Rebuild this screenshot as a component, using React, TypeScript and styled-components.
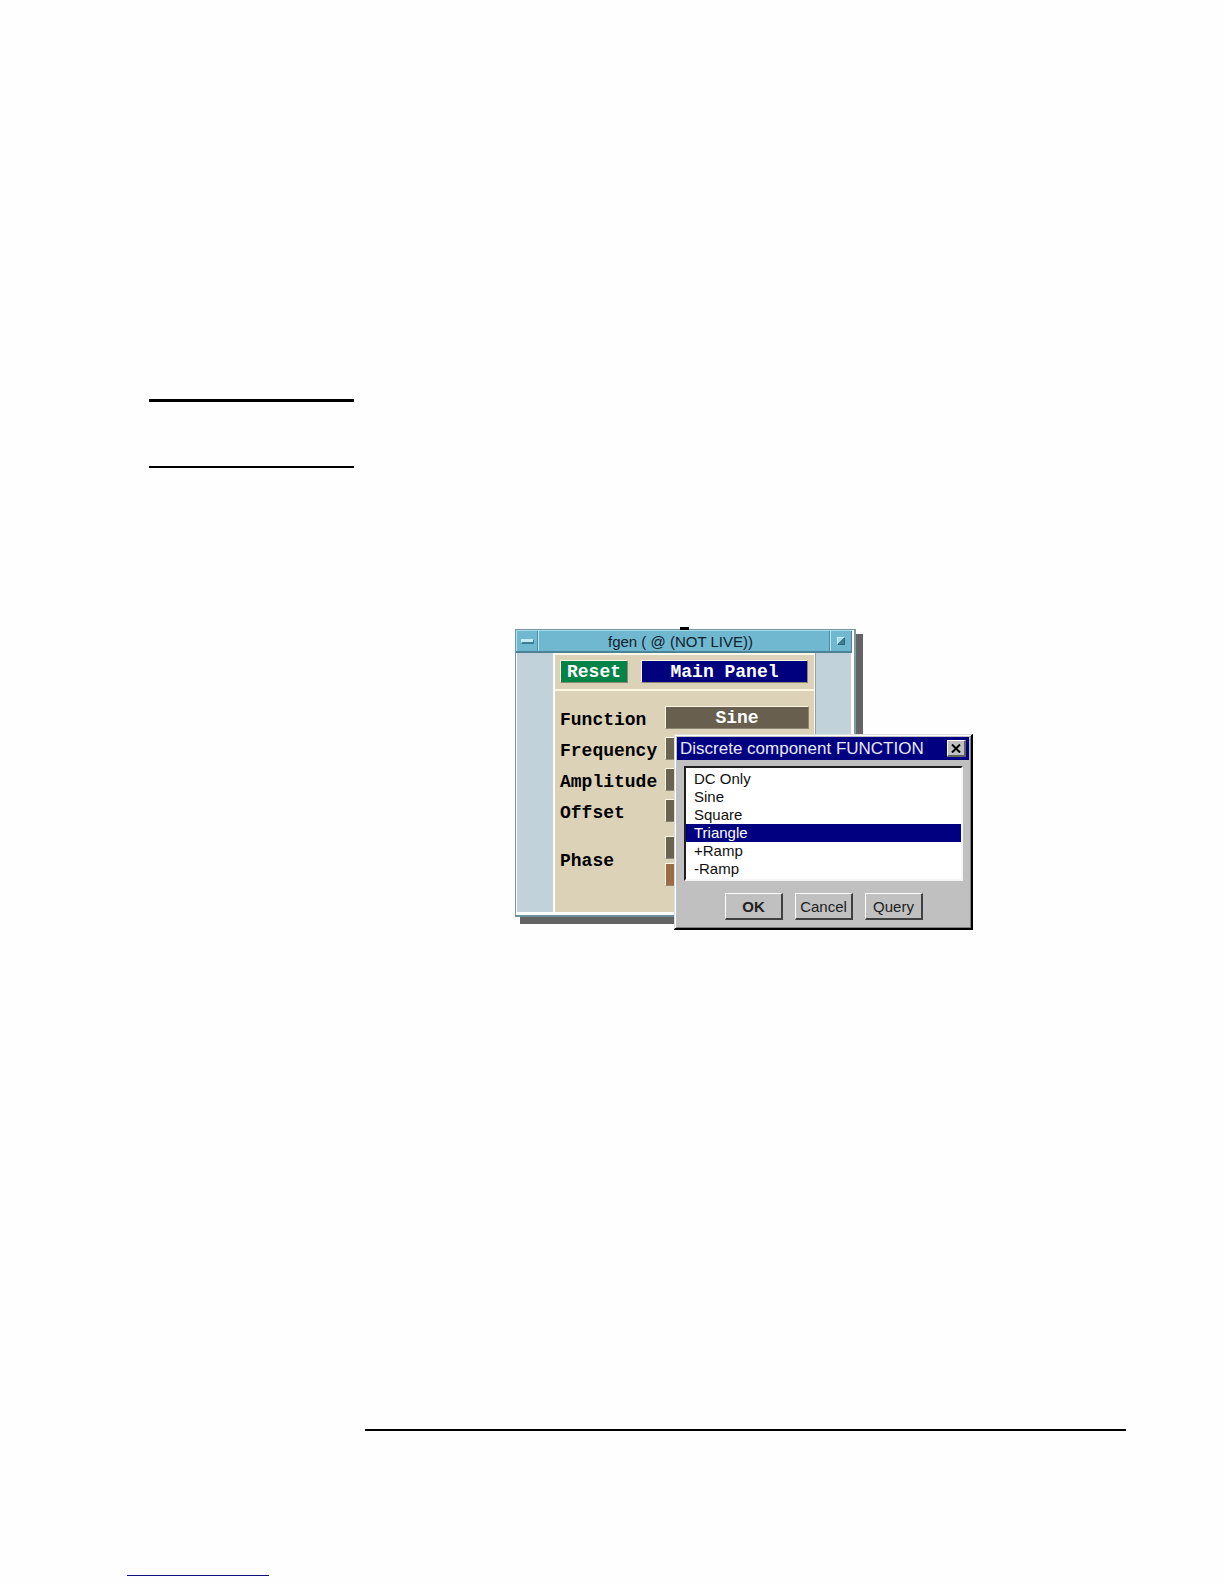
import { createGlobalStyle, styled } from "styled-components"

const parameters = ["Frequency", "Amplitude", "Offset"]
const waveforms = ["DC Only", "Sine", "Square", "Triangle", "+Ramp", "-Ramp"]

export default function App() {
  return (
    <Page>
      <GlobalStyle />
      <SideHeading />
      <Figure>
        <Instrument />
        <FunctionDialog />
      </Figure>
      <FooterLine />
      <FooterLink href="#top" aria-label="Back to top" />
    </Page>
  )
}

const Instrument = () => {
  return (
    <Window>
      <Pin />
      <TitleBar>
        <TitleButton aria-label="Window menu">
          <MenuMark />
        </TitleButton>
        <Title>fgen ( @ (NOT LIVE))</Title>
        <TitleButton aria-label="Maximize" $last>
          <SizeMark />
        </TitleButton>
      </TitleBar>
      <WindowBody>
        <Panel>
          <PanelHeader>
            <PanelButton $color="#028448">Reset</PanelButton>
            <PanelButton $color="#00007f" $grow>
              Main Panel
            </PanelButton>
          </PanelHeader>
          <Fields>
            <Field>
              <FieldName>Function</FieldName>
              <PanelButton $color="#695f4f" $grow>
                Sine
              </PanelButton>
            </Field>
            {parameters.map((name) => (
              <Field key={name}>
                <FieldName>{name}</FieldName>
                <PanelButton $color="#69634f" $grow aria-label={name} />
              </Field>
            ))}
            <PhaseField>
              <FieldName>Phase</FieldName>
              <PhaseButtons>
                <PanelButton $color="#69634f" aria-label="Phase" />
                <PanelButton $color="#9b6b48" aria-label="Phase unit" />
              </PhaseButtons>
            </PhaseField>
          </Fields>
        </Panel>
      </WindowBody>
    </Window>
  )
}

const FunctionDialog = () => {
  return (
    <Dialog role="dialog" aria-labelledby="dialog-title">
      <DialogBar>
        <DialogTitle id="dialog-title">Discrete component FUNCTION</DialogTitle>
        <CloseButton aria-label="Close">
          <svg width="10" height="9" viewBox="0 0 10 9">
            <path d="M1 0.5 9 8.5M9 0.5 1 8.5" stroke="#000" strokeWidth="2" />
          </svg>
        </CloseButton>
      </DialogBar>
      <List role="listbox" aria-labelledby="dialog-title">
        {waveforms.map((name) => (
          <Option
            key={name}
            role="option"
            aria-selected={name === "Triangle"}
            $selected={name === "Triangle"}
          >
            {name}
          </Option>
        ))}
      </List>
      <DialogButtons>
        <DialogButton $primary>OK</DialogButton>
        <DialogButton>Cancel</DialogButton>
        <DialogButton>Query</DialogButton>
      </DialogButtons>
    </Dialog>
  )
}

const GlobalStyle = createGlobalStyle`
  body {
    margin: 0;
    background-color: #fefefe;
  }
  * {
    box-sizing: border-box;
  }
  button {
    margin: 0;
    padding: 0;
    border-radius: 0;
  }
`

const Page = styled.main`
  display: flex;
  flex-direction: column;
  padding: 399px 98px 8px 127px;
  font-family: "Liberation Sans", Arial, sans-serif;
`
const SideHeading = styled.div`
  width: 205px;
  height: 69px;
  margin-left: 22px;
  border-top: 3px solid #000;
  border-bottom: 2px solid #000;
`
const Figure = styled.figure`
  position: relative;
  align-self: flex-start;
  width: 459px;
  margin: 161px 0 0 388px;
`
const FooterLine = styled.hr`
  align-self: stretch;
  height: 2px;
  margin: 512px 0 0 238px;
  border: 0;
  background-color: #000;
`
const FooterLink = styled.a`
  width: 142px;
  height: 1px;
  margin-top: 144px;
  background-color: #10107a;
`

const Window = styled.section`
  position: relative;
  width: 341px;
  border: 1px solid #7797a0;
  border-right: 2px solid #7f9ba3;
  border-bottom: 2px solid #6b909c;
  background-color: #fff;
  box-shadow: 6px 6px 0 1px #636363;
`
/* input pin on the top edge of the object */
const Pin = styled.span`
  position: absolute;
  top: -3px;
  left: 164px;
  width: 9px;
  height: 3px;
  background-color: #000;
`
const TitleBar = styled.header`
  display: flex;
  height: 23px;
  margin-right: 2px;
  border-top: 1px solid #a6dcea;
  border-bottom: 2px solid #4b8296;
  background-color: #70b7d0;
`
const TitleButton = styled.button<{ $last?: boolean }>`
  display: flex;
  align-items: center;
  justify-content: center;
  width: 22px;
  border: 0;
  border-left: 1px solid #b4e6f2;
  border-right: 1px solid ${({ $last }) => ($last ? "#4b8296" : "#528ca1")};
  background-color: #70b7d0;
`
const MenuMark = styled.span`
  width: 13px;
  height: 5px;
  border: 1px solid #c4ecf6;
  border-right-color: #427a8e;
  border-bottom: 2px solid #427a8e;
  background-color: #c4ecf6;
`
const SizeMark = styled.span`
  width: 8px;
  height: 8px;
  border: 1px solid #c4ecf6;
  border-right-color: #2f687d;
  border-bottom-color: #2f687d;
  background: linear-gradient(135deg, #a5dcec 50%, #3f7d93 50%);
`
const Title = styled.h1`
  flex: 1;
  margin: 0;
  padding-right: 7px;
  border-left: 1px solid #b4e6f2;
  border-right: 1px solid #528ca1;
  color: #10222a;
  font-size: 15px;
  font-weight: 400;
  line-height: 21px;
  text-align: center;
`
const WindowBody = styled.div`
  display: flex;
  margin: 0 3px 3px 1px;
  padding: 0 36px;
  background-color: #c2d2da;
`
const Panel = styled.div`
  flex: 1;
  height: 259px;
  border-top: 2px solid #fdf8ea;
  border-left: 2px solid #fff;
  border-right: 1px solid #fff8e6;
  background-color: #dcd2b8;
  box-shadow: 1px 0 0 #94a0a4;
`
const PanelHeader = styled.div`
  display: flex;
  gap: 13px;
  padding: 5px 6px 6px 5px;
  border-bottom: 2px solid #fdf6e0;
`
const PanelButton = styled.button<{ $color: string; $grow?: boolean }>`
  flex: ${({ $grow }) => ($grow ? "1" : "none")};
  min-width: 68px;
  height: 23px;
  border: 1px solid #fbf5e3;
  border-right-color: #8c8674;
  border-bottom-color: #8c8674;
  background-color: ${({ $color }) => $color};
  color: #fff;
  font-family: "Liberation Mono", "Courier New", monospace;
  font-size: 18px;
  font-weight: 700;
  line-height: 18px;
`
const Fields = styled.div`
  padding: 15px 5px 0;
`
const Field = styled.div`
  display: flex;
  height: 31px;
`
const FieldName = styled.span`
  width: 105px;
  color: #000;
  font-family: "Liberation Mono", "Courier New", monospace;
  font-size: 18px;
  font-weight: 700;
  line-height: 28px;
`
const PhaseField = styled.div`
  display: flex;
  align-items: center;
  margin-top: 6px;
`
const PhaseButtons = styled.div`
  display: flex;
  flex: 1;
  flex-direction: column;
  gap: 4px;
`

const Dialog = styled.div`
  position: absolute;
  top: 105px;
  left: 159px;
  width: 299px;
  padding: 2px;
  border: 1px solid #dfdfdf;
  border-right: 2px solid #000;
  border-bottom: 2px solid #000;
  background-color: #c0c0c0;
  box-shadow: inset 1px 1px 0 #fff, inset -1px -1px 0 #808080;
`
const DialogBar = styled.div`
  display: flex;
  align-items: center;
  justify-content: space-between;
  height: 23px;
  padding: 0 3px;
  background-color: #000080;
`
const DialogTitle = styled.h2`
  margin: 0;
  color: #e8e8ff;
  font-size: 17px;
  font-weight: 400;
  line-height: 23px;
  white-space: nowrap;
`
const CloseButton = styled.button`
  display: flex;
  align-items: center;
  justify-content: center;
  width: 19px;
  height: 17px;
  border: 1px solid #fff;
  border-right: 2px solid #606060;
  border-bottom: 2px solid #606060;
  background-color: #c0c0c0;
`
const List = styled.ul`
  margin: 6px 6px 0 7px;
  padding: 2px 0 1px;
  border: 2px solid #202020;
  border-right-color: #f4f4f4;
  border-bottom-color: #f4f4f4;
  background-color: #fff;
  list-style: none;
`
const Option = styled.li<{ $selected: boolean }>`
  height: 18px;
  padding-left: 8px;
  background-color: ${({ $selected }) => ($selected ? "#000080" : "#fff")};
  color: ${({ $selected }) => ($selected ? "#fff" : "#101010")};
  font-size: 15px;
  line-height: 18px;
`
const DialogButtons = styled.div`
  display: flex;
  justify-content: center;
  gap: 12px;
  padding: 12px 0 6px 2px;
`
const DialogButton = styled.button<{ $primary?: boolean }>`
  width: 58px;
  height: 27px;
  border: 1px solid #fff;
  border-right: 2px solid #404040;
  border-bottom: 2px solid #404040;
  background-color: #c0c0c0;
  color: #202020;
  font-family: inherit;
  font-size: 15px;
  font-weight: ${({ $primary }) => ($primary ? 700 : 400)};
`
